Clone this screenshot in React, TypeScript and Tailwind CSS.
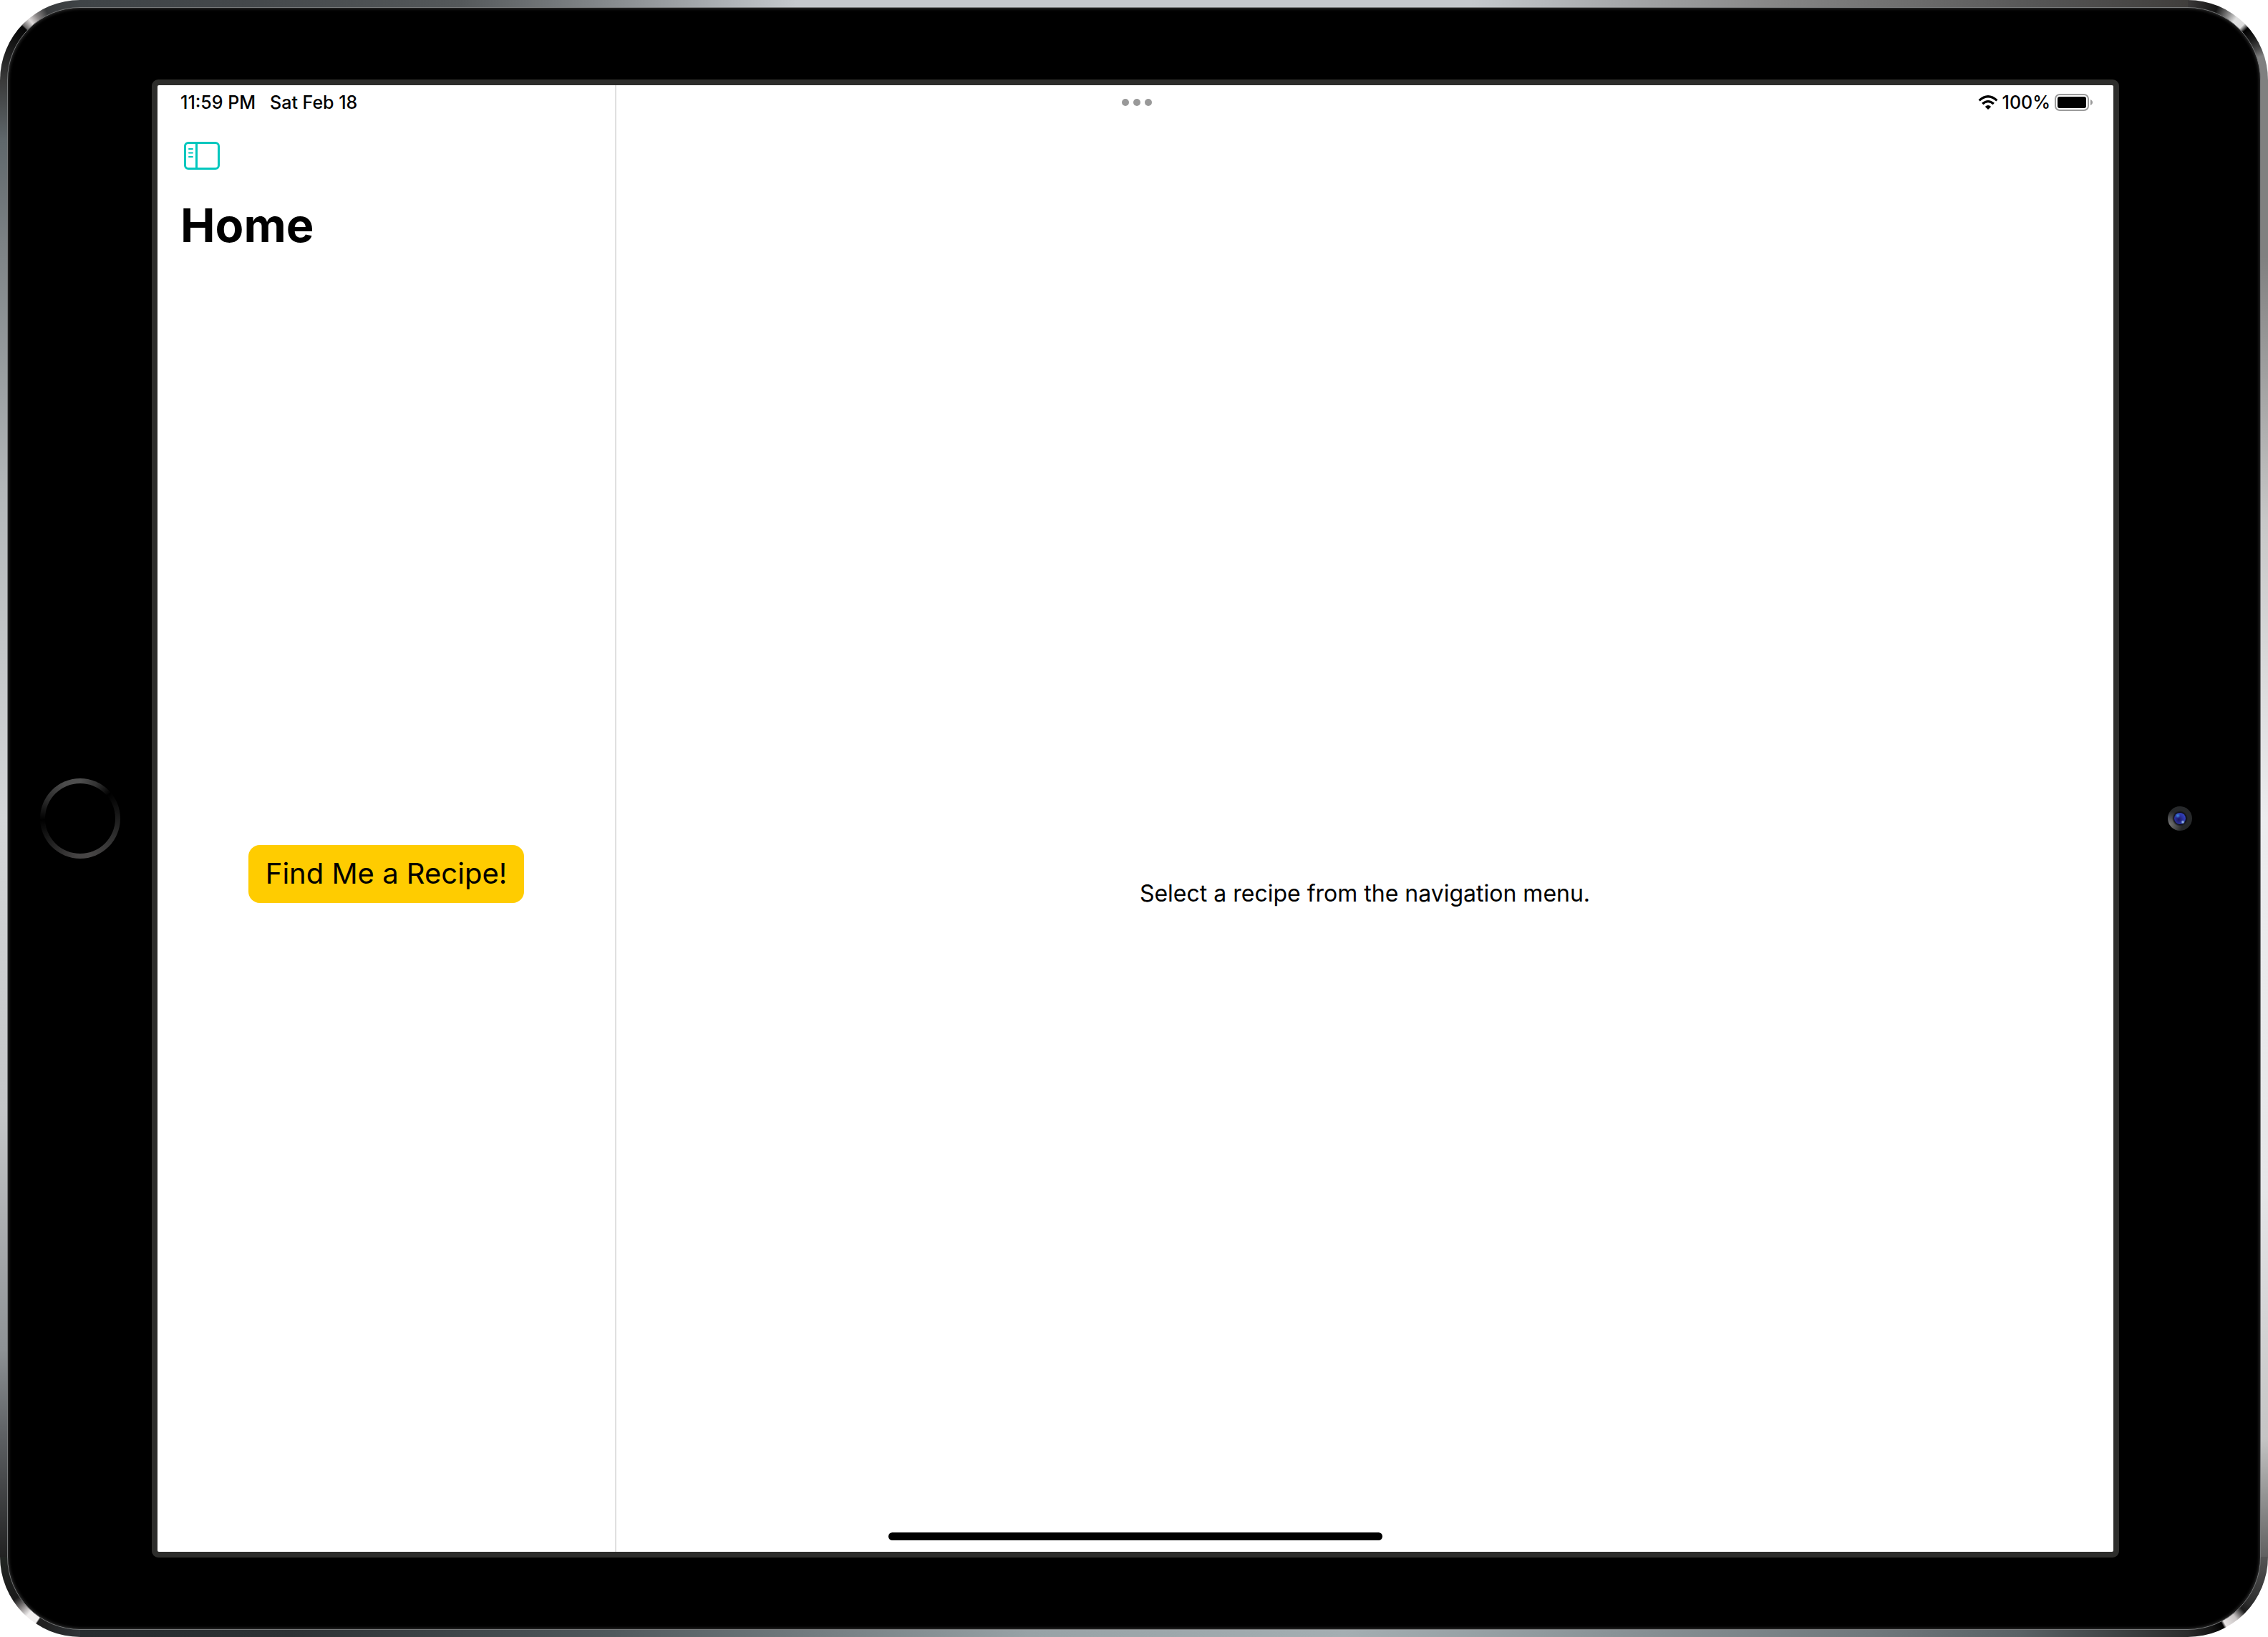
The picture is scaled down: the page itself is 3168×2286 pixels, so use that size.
import type { ReactNode } from "react";

function SidebarIcon() {
  return (
    <svg width="52" height="40" viewBox="0 0 52 40" fill="none" stroke="#00c7be" aria-hidden="true">
      <rect x="2.5" y="2.5" width="47" height="36" rx="4.5" strokeWidth="3" />
      <path d="M18.5 3v35" strokeWidth="3" />
      <path d="M8 11h5M8 16.500h5M8 22h5" strokeWidth="2" strokeLinecap="round" />
    </svg>
  );
}

function WifiIcon() {
  return (
    <svg width="28" height="20" viewBox="0 0 28 20" fill="none" stroke="#000" strokeWidth="3.3" aria-hidden="true">
      <path d="M1.6 7.4Q14 -3.8 26.4 7.4" />
      <path d="M6.2 12.1Q14 5.2 21.8 12.1" />
      <path d="M9.8 15.9Q14 12.3 18.2 15.9L14 20Z" fill="#000" stroke="none" />
    </svg>
  );
}

function BatteryIcon() {
  return (
    <svg width="54" height="24" viewBox="0 0 54 24" aria-hidden="true">
      <rect x="1" y="1" width="46" height="22" rx="6" fill="none" stroke="#9b9b9b" strokeWidth="2" />
      <rect x="4" y="4" width="40" height="16" rx="3" />
      <path d="M50 8c4 1.500 4 6.500 0 8z" fill="#9b9b9b" />
    </svg>
  );
}

function HomeButton() {
  return (
    <button
      type="button"
      aria-label="Home button"
      className="size-28 shrink-0 rounded-full bg-[conic-gradient(from_0deg,#505050_0deg,#333_25deg,#000_50deg,#1c1c1c_90deg,#303030_120deg,#484646_165deg,#464444_185deg,#1c1c1c_235deg,#000_268deg,#2c2c2c_300deg,#4c4c4c_335deg,#505050_360deg)] p-[7px]"
    >
      <span className="block size-full rounded-full bg-black" />
    </button>
  );
}

function Camera() {
  return (
    <svg width="34" height="34" viewBox="0 0 34 34" aria-hidden="true">
      <defs>
        <radialGradient id="ring" cx="0.05" cy="0.75" r="0.55">
          <stop offset="0" stopColor="#777" />
          <stop offset="1" stopColor="#26282a" />
        </radialGradient>
        <radialGradient id="well">
          <stop offset="0.7" stopColor="#050510" />
          <stop offset="1" stopColor="#050510" stopOpacity="0" />
        </radialGradient>
        <radialGradient id="lens" cx="0.4" cy="0.6" r="0.65">
          <stop offset="0" stopColor="#1c1560" />
          <stop offset="0.6" stopColor="#2c34a0" />
          <stop offset="1" stopColor="#3444c0" />
        </radialGradient>
        <radialGradient id="glintA">
          <stop offset="0" stopColor="#3f8fd8" />
          <stop offset="1" stopColor="#3f8fd8" stopOpacity="0" />
        </radialGradient>
        <radialGradient id="glintB">
          <stop offset="0" stopColor="#c8e4ff" />
          <stop offset="1" stopColor="#6aa8f0" stopOpacity="0" />
        </radialGradient>
      </defs>
      <circle cx="17" cy="17" r="17" fill="url(#ring)" />
      <circle cx="17" cy="17" r="11" fill="url(#well)" />
      <circle cx="17" cy="17" r="8" fill="url(#lens)" />
      <circle cx="14" cy="13" r="3.500" fill="url(#glintA)" />
      <circle cx="21" cy="22" r="3" fill="url(#glintB)" />
    </svg>
  );
}

function MetalRim() {
  return (
    <div aria-hidden="true" className="absolute inset-0 grid grid-cols-[112px_1fr_112px] grid-rows-[112px_1fr_112px]">
      <div className="bg-[conic-gradient(from_270deg_at_100%_100%,#3a3a3a_0deg,#202020_20deg,#050505_43deg,#6a6868_44deg,#dedada_50deg,#8a8686_56deg,#383a3c_64deg,#3f4447_90deg,#000_90deg)]" />
      <div className="bg-[linear-gradient(90deg,#3f4447_0%,#44484b_8%,#54585a_18%,#c5c9cd_34%,#c5c9cd_66%,#888_80%,#555_93%,#403e3c_100%)]" />
      <div className="bg-[conic-gradient(from_0deg_at_0%_100%,#3a3838_0deg,#161616_22deg,#8a8a8a_32deg,#e0e0e0_38deg,#dcdcdc_45deg,#000_49deg,#1c1c1c_58deg,#4a4a4a_66deg,#808080_72deg,#808080_90deg)]" />
      <div className="bg-[linear-gradient(180deg,#3a3a3a_0%,#5f676b_4%,#7c8285_11%,#b4b8ba_28%,#d4d6d8_50%,#c4c6c8_70%,#8e9295_86%,#5c5f62_92%,#222_100%)]" />
      <div className="bg-black" />
      <div className="bg-[linear-gradient(180deg,#808080_0%,#808080_12%,#c8c8c8_30%,#ececee_50%,#e6e6e8_75%,#c4c4c4_92%,#606060_100%)]" />
      <div className="bg-[conic-gradient(from_180deg_at_100%_0%,#303438_0deg,#202020_28deg,#222_33deg,#f2f0f0_34deg,#f0eeee_42deg,#8a8686_49deg,#1a1a1a_57deg,#222623_90deg)]" />
      <div className="bg-[linear-gradient(90deg,#272b2e_0%,#2e3235_10%,#50585c_25%,#98a2a6_45%,#a4aeb2_60%,#70787c_85%,#5a6266_92%,#2c2c2c_100%)]" />
      <div className="bg-[conic-gradient(from_90deg_at_0%_0%,#555_0deg,#2c2c2c_38deg,#1a1a1a_44deg,#c8c4c4_52deg,#e8e4e4_61deg,#000_63deg,#141414_72deg,#2c2c2c_90deg)]" />
    </div>
  );
}

function StatusBar() {
  return (
    <div className="absolute inset-x-0 top-0 flex h-12 items-center justify-between pr-7 pl-8 text-[25px] leading-none font-medium">
      <div className="flex flex-1 gap-5">
        <span>11:59 PM</span>
        <span>Sat Feb 18</span>
      </div>
      <button type="button" aria-label="Multitasking" className="flex gap-1.5">
        <span className="size-[10px] rounded-full bg-[#999]" />
        <span className="size-[10px] rounded-full bg-[#999]" />
        <span className="size-[10px] rounded-full bg-[#999]" />
      </button>
      <div className="flex flex-1 items-center justify-end">
        <WifiIcon />
        <span className="mx-1.5">100%</span>
        <BatteryIcon />
      </div>
    </div>
  );
}

function Screen({ children }: { children: ReactNode }) {
  return (
    <div className="my-[100px] flex flex-1 self-stretch rounded-[9px] border-8 border-[#2d2d2b] bg-[#2d2d2b]">
      <div className="relative flex flex-1 overflow-hidden rounded-[2px] bg-white">
        {children}
        <StatusBar />
        <div className="absolute bottom-4 left-1/2 h-[11px] w-[690px] -translate-x-1/2 rounded-full bg-black" />
      </div>
    </div>
  );
}

export default function App() {
  return (
    <div className="relative min-h-screen overflow-hidden bg-white font-['Inter',sans-serif] text-black">
      <div className="relative flex min-h-screen overflow-hidden rounded-[112px] p-[10px]">
        <MetalRim />
        <div className="relative flex flex-1 items-center rounded-[102px] border border-[#77797a] bg-black shadow-[inset_0_0_4px_1px_#333]">
          <div className="flex w-[201px] justify-center">
            <HomeButton />
          </div>
          <Screen>
            <aside className="flex w-[641px] flex-col border-r-2 border-[#e0e0e0]">
              <header className="px-8 pt-[78px]">
                <button type="button" aria-label="Toggle sidebar" className="ml-1 block">
                  <SidebarIcon />
                </button>
                <h1 className="mt-[38px] text-[65px] leading-[80px] font-bold">Home</h1>
              </header>
              <div className="flex flex-1 items-center justify-center pb-[82px]">
                <button type="button" className="h-[81px] rounded-2xl bg-[#ffcc00] px-6 text-[40px] leading-none">
                  Find Me a Recipe!
                </button>
              </div>
            </aside>
            <main className="flex flex-1 items-center justify-center pt-[210px]">
              <p className="text-[32px] leading-10">Select a recipe from the navigation menu.</p>
            </main>
          </Screen>
          <div className="flex w-[197px] justify-center pr-7">
            <Camera />
          </div>
        </div>
      </div>
    </div>
  );
}
